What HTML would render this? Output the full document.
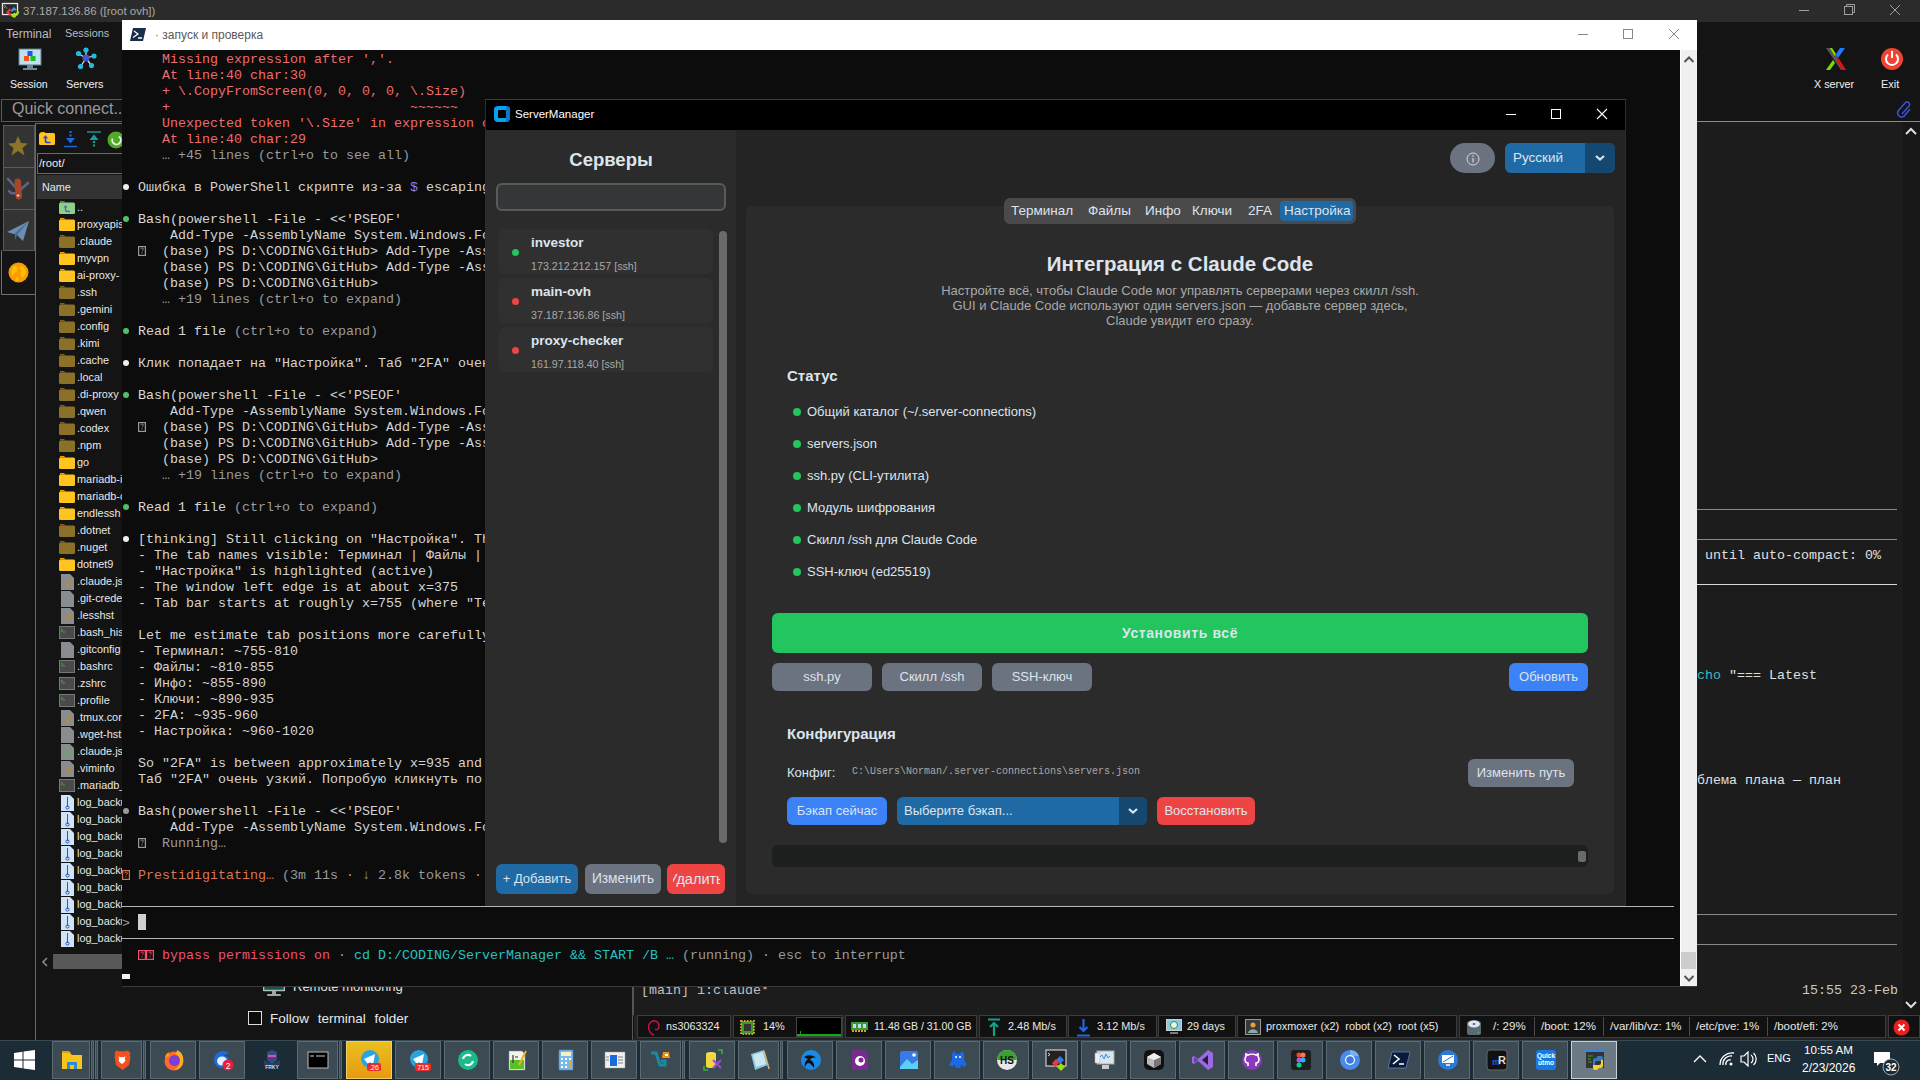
<!DOCTYPE html><html><head><meta charset="utf-8"><style>
*{margin:0;padding:0;box-sizing:border-box}
html,body{width:1920px;height:1080px;overflow:hidden;background:#141414;font-family:"Liberation Sans",sans-serif;font-size:12px;color:#ddd}
body{position:relative}
.a{position:absolute}
.nw{white-space:nowrap}
.mono{font-family:"Liberation Mono",monospace}
.tl{position:absolute;left:0;height:16px;line-height:16px;font-family:"Liberation Mono",monospace;font-size:13.333px;white-space:pre;color:#cccccc}
.rd{color:#ef6b6b}.gy{color:#9a9a9a}.wh{color:#d4d4d4}.bd{color:#d8d8d8}
.or{color:#d77757}.pk{color:#f0506e}.cy{color:#2bc0c0}
.dot{display:inline-block;width:6px;height:6px;border-radius:50%;vertical-align:1px;margin-left:1px;margin-right:1px}
.bx{display:inline-block;width:6px;height:9px;border:1px solid currentColor;vertical-align:-1px;margin-left:1px;margin-right:1px}
.fr{position:absolute;left:77px;height:17px;line-height:17px;font-size:10.9px;color:#e8e8e8;white-space:nowrap}
.fi{position:absolute;left:59px;width:16px;height:13px}
.btn{position:absolute;border-radius:6px;color:#dce4ee;font-size:13px;text-align:center;white-space:nowrap}
.tbi{position:absolute;top:1042px;width:46px;height:37px;background:#3b4a52;border:1px solid #56646b}
</style></head><body>
<div class="a" style="left:0;top:0;width:1920px;height:22px;background:#2b2b2b"></div>
<svg class="a" style="left:0px;top:0px" width="22" height="22" viewBox="0 0 22 22">
<rect x="2.5" y="3.5" width="15" height="11" fill="#2a2a2a" stroke="#e8e8e8" stroke-width="1.3"/>
<path d="M4.2 5.2l1.6 1.2-1.6 1.2M6 8h1.2" stroke="#ccc" fill="none" stroke-width=".7"/>
<path d="M10.5 10.5l3.5-3.5 2.5 2.5-1.5 1.5-1-1-2 2z" fill="#4d8ff0"/>
<path d="M6 12l3.5-3.5 1.5 1.5-2 2 2.5 2.5-1.5 1.5z" fill="#f03838"/>
<path d="M11 16l2.5-2.5 1-1 1 1 2.5-2.5 1.5 1.5-5 5.5z" fill="#99ee00"/>
</svg>
<div class="a nw" style="left:23px;top:5px;font-size:11.5px;color:#a9a9a9">37.187.136.86 ([root ovh])</div>
<svg class="a" style="left:1780px;top:0" width="140" height="22">
<path d="M19 10.5h10" stroke="#a0a0a0" stroke-width="1"/>
<rect x="64.5" y="6.5" width="8" height="8" fill="none" stroke="#a0a0a0"/><path d="M66.5 6.5v-2h8v8h-2" fill="none" stroke="#a0a0a0"/>
<path d="M110 5l10 10M120 5l-10 10" stroke="#a0a0a0" stroke-width="1"/>
</svg>
<div class="a" style="left:0;top:22px;width:1920px;height:100px;background:#141414"></div>
<div class="a nw" style="left:6px;top:27px;font-size:12px;color:#bdbdbd">Terminal</div>
<div class="a nw" style="left:65px;top:27px;font-size:10.9px;color:#bdbdbd">Sessions</div>
<svg class="a" style="left:18px;top:48px" width="24" height="22" viewBox="0 0 24 22">
<rect x="1" y="1" width="22" height="16" fill="#bfe0f0" stroke="#5a7a88" stroke-width="1"/>
<rect x="9" y="17" width="6" height="3" fill="#6a8a98"/><rect x="5" y="20" width="14" height="2" fill="#6a8a98"/>
<rect x="9.5" y="3" width="5" height="5" fill="#2255ee"/>
<rect x="6" y="8" width="5" height="5" fill="#ee5522"/>
<rect x="12.5" y="8" width="5" height="5" fill="#22bb22"/>
</svg>
<div class="a nw" style="left:10px;top:78px;font-size:10.6px;color:#f0f0f0">Session</div>
<svg class="a" style="left:74px;top:47px" width="24" height="24" viewBox="0 0 24 24">
<g stroke="#ddd" stroke-width="1.3"><path d="M12 11L5 7M12 11L12 3M12 11L19 9M12 11L7 19M12 11L17 18"/></g>
<circle cx="12" cy="11" r="3.5" fill="#4455cc"/>
<circle cx="4.5" cy="6.5" r="2.6" fill="#22bbdd"/><circle cx="12" cy="3" r="2.6" fill="#22bbdd"/>
<circle cx="20" cy="9" r="2.6" fill="#22bbdd"/><circle cx="6.5" cy="19.5" r="2.6" fill="#22bbdd"/><circle cx="17.5" cy="18.5" r="2.6" fill="#22bbdd"/>
</svg>
<div class="a nw" style="left:66px;top:78px;font-size:10.9px;color:#f0f0f0">Servers</div>
<svg class="a" style="left:1824px;top:47px" width="24" height="24" viewBox="0 0 24 24">
<path d="M2 1h5l15 22h-5z" fill="#555"/>
<path d="M6 1h2l4 6-1.5 2z" fill="#88dd00"/>
<path d="M16 1h5l-7 10-2.5-3z" fill="#2277ff"/>
<path d="M2 23h4l5-7-2-3z" fill="#77dd00"/>
<path d="M12 12l2.5-1 7.5 12h-4z" fill="#dd1111"/>
</svg>
<div class="a nw" style="left:1814px;top:78px;font-size:10.8px;color:#f0f0f0">X server</div>
<svg class="a" style="left:1880px;top:47px" width="24" height="24" viewBox="0 0 24 24">
<circle cx="12" cy="12" r="11" fill="#ee4433"/>
<path d="M8 7.5a6 6 0 1 0 8 0" fill="none" stroke="#fff" stroke-width="2"/><path d="M12 4v7" stroke="#fff" stroke-width="2"/>
</svg>
<div class="a nw" style="left:1881px;top:78px;font-size:11px;color:#f0f0f0">Exit</div>
<svg class="a" style="left:1896px;top:100px" width="18" height="18" viewBox="0 0 18 18">
<path d="M6 14l7-8a2.5 2.5 0 0 0-3.5-3.5l-7 8a4 4 0 0 0 5.6 5.6l6-7" fill="none" stroke="#3b4fd0" stroke-width="1.6"/>
</svg>
<div class="a" style="left:1px;top:99px;width:140px;height:23px;border:1px solid #5a5a5a;background:#141414"></div>
<div class="a nw" style="left:12px;top:100px;font-size:16px;color:#9a9a9a">Quick connect...</div>
<div class="a" style="left:0;top:122px;width:36px;height:918px;background:#141414"></div>
<div class="a" style="left:3px;top:125px;width:32px;height:43px;background:#333;border:1px solid #5a5a5a"></div>
<div class="a" style="left:3px;top:167px;width:32px;height:43px;background:#333;border:1px solid #5a5a5a"></div>
<div class="a" style="left:3px;top:209px;width:32px;height:42px;background:#333;border:1px solid #5a5a5a"></div>
<svg class="a" style="left:7px;top:135px" width="22" height="22" viewBox="0 0 22 22"><path d="M11 1l3 7 7 .5-5.5 4.5 2 7.5L11 16l-6.5 4.5 2-7.5L1 8.5 8 8z" fill="#8c7428"/></svg>
<svg class="a" style="left:6px;top:176px" width="24" height="26" viewBox="0 0 24 26"><path d="M2 3l9 10M22 7l-8 7M3 15c2 3 5 3 8 1" stroke="#5b6585" stroke-width="2.6" fill="none" stroke-linecap="round"/><rect x="9" y="2.5" width="6.5" height="21" rx="3.2" fill="#a84428" transform="rotate(-4 12 13)"/><path d="M12 18v3M10.5 19.5h3" stroke="#e8c8c0" stroke-width="1"/></svg>
<svg class="a" style="left:6px;top:219px" width="24" height="24" viewBox="0 0 24 24"><path d="M1 13L23 2 17 22 11 16z" fill="#6a8fb0"/><path d="M11 16l12-14-14 12v7z" fill="#4a6f90"/></svg>
<div class="a" style="left:1px;top:250px;width:35px;height:45px;border-left:1px solid #707070;border-bottom:1px solid #707070"></div>
<svg class="a" style="left:8px;top:262px" width="21" height="21" viewBox="0 0 21 21"><circle cx="10.5" cy="10.5" r="10" fill="#ff9a00"/><path d="M5 5c3-2 5 0 4 3s-3 2-4 5-2-4 0-8zM13 4c3 1 6 5 4 9s-3 3-4 0 2-3 0-5-2-3 0-4zM8 15c2-1 3 1 2 3s-3 1-2-3z" fill="#ffc400"/></svg>
<div class="a" style="left:35px;top:123px;width:598px;height:917px;background:#141414;border-left:1px solid #6a6a6a;border-top:1px solid #6a6a6a;border-right:1px solid #555"></div>
<svg class="a" style="left:39px;top:130px" width="90" height="20" viewBox="0 0 90 20">
<path d="M1.5 2h4l1.5 1.5H1.5z" fill="#f0a800"/><rect x="0" y="3" width="16" height="12" rx="1.5" fill="#ffc420"/>
<path d="M6.5 7v3.5a2 2 0 0 0 2 2h3" stroke="#3348c8" stroke-width="1.7" fill="none"/><path d="M3.8 8.2l2.7-3 2.7 3z" fill="#3348c8"/>
<path d="M31.5 1v2M31.5 4.5v2" stroke="#1f6ad8" stroke-width="2.2"/><path d="M27 8h9l-4.5 5.5z" fill="#1f6ad8"/><path d="M25 16.5h13" stroke="#1f6ad8" stroke-width="1.4"/>
<path d="M48 2h14" stroke="#12a0a0" stroke-width="1.4"/><path d="M50.5 10h9l-4.5-5.5z" fill="#12a0a0"/><path d="M55 11v2M55 14.5v2" stroke="#12a0a0" stroke-width="2.2"/>
<circle cx="77" cy="10" r="8.5" fill="#52a828"/><path d="M73.5 8.5a4.3 4.3 0 1 0 6.3-2" stroke="#e8f8e0" stroke-width="1.8" fill="none"/>
</svg>
<div class="a" style="left:37px;top:153px;width:596px;height:21px;border:1px solid #6a6a6a;background:#141414"></div>
<div class="a nw" style="left:39px;top:157px;font-size:11.2px;color:#f0f0f0">/root/</div>
<div class="a" style="left:37px;top:175px;width:596px;height:24px;background:#333"></div>
<div class="a nw" style="left:42px;top:181px;font-size:10.8px;color:#e8e8e8">Name</div>
<svg class="fi" style="top:201px" viewBox="0 0 16 13"><path d="M1 0h4l1.5 1.5H1z" fill="#22aa22"/><rect x="0" y="1.5" width="16" height="11.5" rx="1.5" fill="#8ecf8e"/><path d="M6.5 5.5v3a2 2 0 0 0 2 2h2.5" stroke="#5560b0" stroke-width="1.3" fill="none"/><path d="M4.5 6.5l2-2.2 2 2.2z" fill="#5560b0"/></svg>
<div class="fr" style="top:199px">..</div>
<svg class="fi" style="top:218px" viewBox="0 0 16 13"><path d="M1 0h4l1.5 1.5H1z" fill="#f0a000"/><rect x="0" y="1.5" width="16" height="11.5" rx="1.5" fill="#ffc420"/></svg>
<div class="fr" style="top:216px">proxyapis</div>
<svg class="fi" style="top:235px" viewBox="0 0 16 13"><path d="M1 0h4l1.5 1.5H1z" fill="#7a6020"/><rect x="0" y="1.5" width="16" height="11.5" rx="1.5" fill="#8b7128"/></svg>
<div class="fr" style="top:233px">.claude</div>
<svg class="fi" style="top:252px" viewBox="0 0 16 13"><path d="M1 0h4l1.5 1.5H1z" fill="#f0a000"/><rect x="0" y="1.5" width="16" height="11.5" rx="1.5" fill="#ffc420"/></svg>
<div class="fr" style="top:250px">myvpn</div>
<svg class="fi" style="top:269px" viewBox="0 0 16 13"><path d="M1 0h4l1.5 1.5H1z" fill="#f0a000"/><rect x="0" y="1.5" width="16" height="11.5" rx="1.5" fill="#ffc420"/></svg>
<div class="fr" style="top:267px">ai-proxy-</div>
<svg class="fi" style="top:286px" viewBox="0 0 16 13"><path d="M1 0h4l1.5 1.5H1z" fill="#7a6020"/><rect x="0" y="1.5" width="16" height="11.5" rx="1.5" fill="#8b7128"/></svg>
<div class="fr" style="top:284px">.ssh</div>
<svg class="fi" style="top:303px" viewBox="0 0 16 13"><path d="M1 0h4l1.5 1.5H1z" fill="#7a6020"/><rect x="0" y="1.5" width="16" height="11.5" rx="1.5" fill="#8b7128"/></svg>
<div class="fr" style="top:301px">.gemini</div>
<svg class="fi" style="top:320px" viewBox="0 0 16 13"><path d="M1 0h4l1.5 1.5H1z" fill="#7a6020"/><rect x="0" y="1.5" width="16" height="11.5" rx="1.5" fill="#8b7128"/></svg>
<div class="fr" style="top:318px">.config</div>
<svg class="fi" style="top:337px" viewBox="0 0 16 13"><path d="M1 0h4l1.5 1.5H1z" fill="#7a6020"/><rect x="0" y="1.5" width="16" height="11.5" rx="1.5" fill="#8b7128"/></svg>
<div class="fr" style="top:335px">.kimi</div>
<svg class="fi" style="top:354px" viewBox="0 0 16 13"><path d="M1 0h4l1.5 1.5H1z" fill="#7a6020"/><rect x="0" y="1.5" width="16" height="11.5" rx="1.5" fill="#8b7128"/></svg>
<div class="fr" style="top:352px">.cache</div>
<svg class="fi" style="top:371px" viewBox="0 0 16 13"><path d="M1 0h4l1.5 1.5H1z" fill="#7a6020"/><rect x="0" y="1.5" width="16" height="11.5" rx="1.5" fill="#8b7128"/></svg>
<div class="fr" style="top:369px">.local</div>
<svg class="fi" style="top:388px" viewBox="0 0 16 13"><path d="M1 0h4l1.5 1.5H1z" fill="#7a6020"/><rect x="0" y="1.5" width="16" height="11.5" rx="1.5" fill="#8b7128"/></svg>
<div class="fr" style="top:386px">.di-proxy</div>
<svg class="fi" style="top:405px" viewBox="0 0 16 13"><path d="M1 0h4l1.5 1.5H1z" fill="#7a6020"/><rect x="0" y="1.5" width="16" height="11.5" rx="1.5" fill="#8b7128"/></svg>
<div class="fr" style="top:403px">.qwen</div>
<svg class="fi" style="top:422px" viewBox="0 0 16 13"><path d="M1 0h4l1.5 1.5H1z" fill="#7a6020"/><rect x="0" y="1.5" width="16" height="11.5" rx="1.5" fill="#8b7128"/></svg>
<div class="fr" style="top:420px">.codex</div>
<svg class="fi" style="top:439px" viewBox="0 0 16 13"><path d="M1 0h4l1.5 1.5H1z" fill="#7a6020"/><rect x="0" y="1.5" width="16" height="11.5" rx="1.5" fill="#8b7128"/></svg>
<div class="fr" style="top:437px">.npm</div>
<svg class="fi" style="top:456px" viewBox="0 0 16 13"><path d="M1 0h4l1.5 1.5H1z" fill="#f0a000"/><rect x="0" y="1.5" width="16" height="11.5" rx="1.5" fill="#ffc420"/></svg>
<div class="fr" style="top:454px">go</div>
<svg class="fi" style="top:473px" viewBox="0 0 16 13"><path d="M1 0h4l1.5 1.5H1z" fill="#f0a000"/><rect x="0" y="1.5" width="16" height="11.5" rx="1.5" fill="#ffc420"/></svg>
<div class="fr" style="top:471px">mariadb-i</div>
<svg class="fi" style="top:490px" viewBox="0 0 16 13"><path d="M1 0h4l1.5 1.5H1z" fill="#f0a000"/><rect x="0" y="1.5" width="16" height="11.5" rx="1.5" fill="#ffc420"/></svg>
<div class="fr" style="top:488px">mariadb-c</div>
<svg class="fi" style="top:507px" viewBox="0 0 16 13"><path d="M1 0h4l1.5 1.5H1z" fill="#f0a000"/><rect x="0" y="1.5" width="16" height="11.5" rx="1.5" fill="#ffc420"/></svg>
<div class="fr" style="top:505px">endlessh</div>
<svg class="fi" style="top:524px" viewBox="0 0 16 13"><path d="M1 0h4l1.5 1.5H1z" fill="#7a6020"/><rect x="0" y="1.5" width="16" height="11.5" rx="1.5" fill="#8b7128"/></svg>
<div class="fr" style="top:522px">.dotnet</div>
<svg class="fi" style="top:541px" viewBox="0 0 16 13"><path d="M1 0h4l1.5 1.5H1z" fill="#7a6020"/><rect x="0" y="1.5" width="16" height="11.5" rx="1.5" fill="#8b7128"/></svg>
<div class="fr" style="top:539px">.nuget</div>
<svg class="fi" style="top:558px" viewBox="0 0 16 13"><path d="M1 0h4l1.5 1.5H1z" fill="#f0a000"/><rect x="0" y="1.5" width="16" height="11.5" rx="1.5" fill="#ffc420"/></svg>
<div class="fr" style="top:556px">dotnet9</div>
<svg class="fi" style="top:574px;left:61px;width:13px;height:16px" viewBox="0 0 13 16"><path d="M0 0h9l4 4v12H0z" fill="#8a8d90"/><path d="M5 12l5-6" stroke="#c08830" stroke-width="2"/></svg>
<div class="fr" style="top:573px">.claude.js</div>
<svg class="fi" style="top:591px;left:61px;width:13px;height:16px" viewBox="0 0 13 16"><path d="M0 0h9l4 4v12H0z" fill="#8a8d90"/></svg>
<div class="fr" style="top:590px">.git-crede</div>
<svg class="fi" style="top:608px;left:61px;width:13px;height:16px" viewBox="0 0 13 16"><path d="M0 0h9l4 4v12H0z" fill="#8a8d90"/><path d="M5 12l5-6" stroke="#c08830" stroke-width="2"/></svg>
<div class="fr" style="top:607px">.lesshst</div>
<svg class="fi" style="top:626px" viewBox="0 0 16 13"><rect x=".5" y=".5" width="15" height="12" fill="#4a4a4a" stroke="#777"/><path d="M2 3l2 1.5-2 1.5M4 6h2" stroke="#3c3" stroke-width=".8" fill="none"/></svg>
<div class="fr" style="top:624px">.bash_his</div>
<svg class="fi" style="top:642px;left:61px;width:13px;height:16px" viewBox="0 0 13 16"><path d="M0 0h9l4 4v12H0z" fill="#8a8d90"/></svg>
<div class="fr" style="top:641px">.gitconfig</div>
<svg class="fi" style="top:660px" viewBox="0 0 16 13"><rect x=".5" y=".5" width="15" height="12" fill="#4a4a4a" stroke="#777"/><path d="M2 3l2 1.5-2 1.5M4 6h2" stroke="#3c3" stroke-width=".8" fill="none"/></svg>
<div class="fr" style="top:658px">.bashrc</div>
<svg class="fi" style="top:677px" viewBox="0 0 16 13"><rect x=".5" y=".5" width="15" height="12" fill="#4a4a4a" stroke="#777"/><path d="M2 3l2 1.5-2 1.5M4 6h2" stroke="#3c3" stroke-width=".8" fill="none"/></svg>
<div class="fr" style="top:675px">.zshrc</div>
<svg class="fi" style="top:694px" viewBox="0 0 16 13"><rect x=".5" y=".5" width="15" height="12" fill="#4a4a4a" stroke="#777"/><path d="M2 3l2 1.5-2 1.5M4 6h2" stroke="#3c3" stroke-width=".8" fill="none"/></svg>
<div class="fr" style="top:692px">.profile</div>
<svg class="fi" style="top:710px;left:61px;width:13px;height:16px" viewBox="0 0 13 16"><path d="M0 0h9l4 4v12H0z" fill="#8a8d90"/><path d="M5 12l5-6" stroke="#c08830" stroke-width="2"/></svg>
<div class="fr" style="top:709px">.tmux.con</div>
<svg class="fi" style="top:727px;left:61px;width:13px;height:16px" viewBox="0 0 13 16"><path d="M0 0h9l4 4v12H0z" fill="#8a8d90"/></svg>
<div class="fr" style="top:726px">.wget-hst</div>
<svg class="fi" style="top:744px;left:61px;width:13px;height:16px" viewBox="0 0 13 16"><path d="M0 0h9l4 4v12H0z" fill="#8a8d90"/><circle cx="7" cy="8" r="3" fill="none" stroke="#6a6" stroke-width="1.2"/></svg>
<div class="fr" style="top:743px">.claude.js</div>
<svg class="fi" style="top:761px;left:61px;width:13px;height:16px" viewBox="0 0 13 16"><path d="M0 0h9l4 4v12H0z" fill="#8a8d90"/><path d="M5 12l5-6" stroke="#c08830" stroke-width="2"/></svg>
<div class="fr" style="top:760px">.viminfo</div>
<svg class="fi" style="top:779px" viewBox="0 0 16 13"><rect x=".5" y=".5" width="15" height="12" fill="#4a4a4a" stroke="#777"/><path d="M2 3l2 1.5-2 1.5M4 6h2" stroke="#3c3" stroke-width=".8" fill="none"/></svg>
<div class="fr" style="top:777px">.mariadb_</div>
<svg class="fi" style="top:795px;left:61px;width:13px;height:16px" viewBox="0 0 13 16"><path d="M0 0h9l4 4v12H0z" fill="#cfe4f8"/><path d="M6.5 2v10" stroke="#3355bb" stroke-width="1"/><circle cx="6.5" cy="12.5" r="1.6" fill="none" stroke="#3355bb"/></svg>
<div class="fr" style="top:794px">log_backu</div>
<svg class="fi" style="top:812px;left:61px;width:13px;height:16px" viewBox="0 0 13 16"><path d="M0 0h9l4 4v12H0z" fill="#cfe4f8"/><path d="M6.5 2v10" stroke="#3355bb" stroke-width="1"/><circle cx="6.5" cy="12.5" r="1.6" fill="none" stroke="#3355bb"/></svg>
<div class="fr" style="top:811px">log_backu</div>
<svg class="fi" style="top:829px;left:61px;width:13px;height:16px" viewBox="0 0 13 16"><path d="M0 0h9l4 4v12H0z" fill="#cfe4f8"/><path d="M6.5 2v10" stroke="#3355bb" stroke-width="1"/><circle cx="6.5" cy="12.5" r="1.6" fill="none" stroke="#3355bb"/></svg>
<div class="fr" style="top:828px">log_backu</div>
<svg class="fi" style="top:846px;left:61px;width:13px;height:16px" viewBox="0 0 13 16"><path d="M0 0h9l4 4v12H0z" fill="#cfe4f8"/><path d="M6.5 2v10" stroke="#3355bb" stroke-width="1"/><circle cx="6.5" cy="12.5" r="1.6" fill="none" stroke="#3355bb"/></svg>
<div class="fr" style="top:845px">log_backu</div>
<svg class="fi" style="top:863px;left:61px;width:13px;height:16px" viewBox="0 0 13 16"><path d="M0 0h9l4 4v12H0z" fill="#cfe4f8"/><path d="M6.5 2v10" stroke="#3355bb" stroke-width="1"/><circle cx="6.5" cy="12.5" r="1.6" fill="none" stroke="#3355bb"/></svg>
<div class="fr" style="top:862px">log_backu</div>
<svg class="fi" style="top:880px;left:61px;width:13px;height:16px" viewBox="0 0 13 16"><path d="M0 0h9l4 4v12H0z" fill="#cfe4f8"/><path d="M6.5 2v10" stroke="#3355bb" stroke-width="1"/><circle cx="6.5" cy="12.5" r="1.6" fill="none" stroke="#3355bb"/></svg>
<div class="fr" style="top:879px">log_backu</div>
<svg class="fi" style="top:897px;left:61px;width:13px;height:16px" viewBox="0 0 13 16"><path d="M0 0h9l4 4v12H0z" fill="#cfe4f8"/><path d="M6.5 2v10" stroke="#3355bb" stroke-width="1"/><circle cx="6.5" cy="12.5" r="1.6" fill="none" stroke="#3355bb"/></svg>
<div class="fr" style="top:896px">log_backu</div>
<svg class="fi" style="top:914px;left:61px;width:13px;height:16px" viewBox="0 0 13 16"><path d="M0 0h9l4 4v12H0z" fill="#cfe4f8"/><path d="M6.5 2v10" stroke="#3355bb" stroke-width="1"/><circle cx="6.5" cy="12.5" r="1.6" fill="none" stroke="#3355bb"/></svg>
<div class="fr" style="top:913px">log_backu</div>
<svg class="fi" style="top:931px;left:61px;width:13px;height:16px" viewBox="0 0 13 16"><path d="M0 0h9l4 4v12H0z" fill="#cfe4f8"/><path d="M6.5 2v10" stroke="#3355bb" stroke-width="1"/><circle cx="6.5" cy="12.5" r="1.6" fill="none" stroke="#3355bb"/></svg>
<div class="fr" style="top:930px">log_backu</div>
<div class="a" style="left:37px;top:953px;width:595px;height:87px;background:#141414"></div>
<svg class="a" style="left:41px;top:957px" width="8" height="10"><path d="M6 1L2 5l4 4" stroke="#8a8a8a" stroke-width="1.6" fill="none"/></svg>
<div class="a" style="left:53px;top:954px;width:580px;height:15px;background:#585858"></div>
<svg class="a" style="left:263px;top:976px" width="22" height="22" viewBox="0 0 22 22"><rect x=".5" y=".5" width="21" height="14" rx="1" fill="#0f5a48" stroke="#b0bcc0" stroke-width="1.6"/><path d="M10 3.5l1 1.5 1-1.5z" fill="#3fd8b0"/><rect x="9" y="15" width="4" height="3" fill="#9aa8ac"/><rect x="4" y="18" width="14" height="2" rx="1" fill="#9aa8ac"/></svg>
<div class="a nw" style="left:293px;top:979px;font-size:13px;color:#e0e0e0">Remote monitoring</div>
<div class="a" style="left:248px;top:1011px;width:14px;height:14px;border:1px solid #ddd;background:#0c0c0c"></div>
<div class="a nw" style="left:270px;top:1011px;font-size:13.5px;color:#e8e8e8;word-spacing:5px">Follow terminal folder</div>
<div class="a" style="left:1697px;top:121px;width:223px;height:1px;background:#8a8a8a"></div>
<div class="a" style="left:1697px;top:122px;width:223px;height:893px;background:#1c1c1c"></div>
<div class="a" style="left:1903px;top:122px;width:17px;height:893px;background:#171717"></div>
<svg class="a" style="left:1904px;top:126px" width="14" height="10"><path d="M2 8l5-5 5 5" stroke="#ddd" stroke-width="2" fill="none"/></svg>
<svg class="a" style="left:1904px;top:1000px" width="14" height="10"><path d="M2 2l5 5 5-5" stroke="#ddd" stroke-width="2" fill="none"/></svg>
<div class="a" style="left:1697px;top:509px;width:200px;height:1px;background:#8a8a8a"></div>
<div class="a" style="left:1697px;top:539px;width:200px;height:1px;background:#8a8a8a"></div>
<div class="a" style="left:1697px;top:584px;width:200px;height:1px;background:#d8d8d8"></div>
<div class="a" style="left:1697px;top:914px;width:200px;height:1px;background:#8a8a8a"></div>
<div class="a" style="left:1697px;top:944px;width:200px;height:1px;background:#8a8a8a"></div>
<div class="a nw mono" style="left:1705px;top:548px;height:15px;line-height:15px;font-size:13.333px;color:#e0e0e0">until auto-compact: 0%</div>
<div class="a nw mono" style="left:1697px;top:668px;height:15px;line-height:15px;font-size:13.333px;color:#e0e0e0"><span style="color:#3cb8c8">cho</span> "=== Latest</div>
<div class="a nw mono" style="left:1697px;top:773px;height:15px;line-height:15px;font-size:13.333px;color:#e0e0e0">блема плана — план</div>
<div class="a nw mono" style="left:1802px;top:983px;height:15px;line-height:15px;font-size:13.333px;color:#c8c8c8">15:55 23-Feb</div>
<div class="a" style="left:634px;top:986px;width:1063px;height:29px;background:#1c1c1c"></div>
<div class="a" style="left:633px;top:986px;width:1px;height:29px;background:#555"></div>
<div class="a nw mono" style="left:641px;top:983px;height:15px;line-height:15px;font-size:13.333px;color:#c0c0c0">[main] 1:claude*</div>
<div class="a" style="left:634px;top:1015px;width:1286px;height:25px;background:#232323"></div>
<div class="a" style="left:637px;top:1015px;width:94px;height:23px;background:#111111;border:1px solid #3c3c3c"></div>
<div class="a" style="left:733px;top:1015px;width:110px;height:23px;background:#111111;border:1px solid #3c3c3c"></div>
<div class="a" style="left:845px;top:1015px;width:132px;height:23px;background:#111111;border:1px solid #3c3c3c"></div>
<div class="a" style="left:979px;top:1015px;width:88px;height:23px;background:#111111;border:1px solid #3c3c3c"></div>
<div class="a" style="left:1068px;top:1015px;width:89px;height:23px;background:#111111;border:1px solid #3c3c3c"></div>
<div class="a" style="left:1158px;top:1015px;width:78px;height:23px;background:#111111;border:1px solid #3c3c3c"></div>
<div class="a" style="left:1237px;top:1015px;width:220px;height:23px;background:#111111;border:1px solid #3c3c3c"></div>
<div class="a" style="left:1459px;top:1015px;width:427px;height:23px;background:#111111;border:1px solid #3c3c3c"></div>
<div class="a" style="left:1888px;top:1015px;width:32px;height:23px;background:#111111;border:1px solid #3c3c3c"></div>
<div class="a" style="left:1534px;top:1017px;width:1px;height:19px;background:#4a4a4a"></div>
<div class="a" style="left:1603px;top:1017px;width:1px;height:19px;background:#4a4a4a"></div>
<div class="a" style="left:1689px;top:1017px;width:1px;height:19px;background:#4a4a4a"></div>
<div class="a" style="left:1767px;top:1017px;width:1px;height:19px;background:#4a4a4a"></div>
<svg class="a" style="left:646px;top:1018px" width="14" height="19" viewBox="0 0 14 19"><path d="M8 17C2 15 1 7 5 4s8 0 8 4-3 4-4 3" fill="none" stroke="#d0104a" stroke-width="1.4"/></svg>
<div class="a" style="white-space:pre;left:666px;top:1020px;font-size:10.8px;color:#e8e8e8">ns3063324</div>
<svg class="a" style="left:739px;top:1019px" width="17" height="17" viewBox="0 0 17 17"><rect x="2" y="2" width="13" height="13" fill="#3a9a2a" stroke="#d8a020" stroke-dasharray="1.5 1.5" stroke-width="2"/><rect x="5" y="5" width="7" height="7" fill="#333"/></svg>
<div class="a" style="white-space:pre;left:763px;top:1020px;font-size:10.9px;color:#e8e8e8">14%</div>
<div class="a" style="left:796px;top:1017px;width:46px;height:20px;background:#000;border:1px solid #444"></div>
<div class="a" style="left:797px;top:1034px;width:44px;height:2px;background:#11aa11"></div>
<div class="a" style="left:800px;top:1031px;width:1px;height:3px;background:#11aa11"></div>
<svg class="a" style="left:851px;top:1021px" width="17" height="12" viewBox="0 0 17 12"><rect x="0" y="1" width="17" height="8" fill="#3a9a3a"/><rect x="2" y="3" width="3" height="4" fill="#bde"/><rect x="7" y="3" width="3" height="4" fill="#bde"/><rect x="12" y="3" width="3" height="4" fill="#bde"/><path d="M1 10h15" stroke="#d8a020" stroke-width="2" stroke-dasharray="2 1"/></svg>
<div class="a" style="white-space:pre;left:874px;top:1020px;font-size:10.6px;color:#e8e8e8">11.48 GB / 31.00 GB</div>
<svg class="a" style="left:987px;top:1018px" width="14" height="19" viewBox="0 0 14 19"><path d="M1 1.5h12M7 18V6M3 9l4-4 4 4" stroke="#13a08a" stroke-width="2.2" fill="none"/></svg>
<div class="a" style="white-space:pre;left:1008px;top:1020px;font-size:10.9px;color:#e8e8e8">2.48 Mb/s</div>
<svg class="a" style="left:1076px;top:1018px" width="15" height="19" viewBox="0 0 15 19"><path d="M1 17.5h13M7.5 1v12M3.5 9l4 4 4-4" stroke="#2266dd" stroke-width="2.2" fill="none"/></svg>
<div class="a" style="white-space:pre;left:1097px;top:1020px;font-size:10.9px;color:#e8e8e8">3.12 Mb/s</div>
<svg class="a" style="left:1166px;top:1019px" width="16" height="16" viewBox="0 0 16 16"><rect x=".5" y=".5" width="15" height="11" fill="#8ac8e8" stroke="#ccc"/><circle cx="8" cy="6" r="3.5" fill="#e8f8e0" stroke="#3a8a3a"/><path d="M4 14h8" stroke="#aaa" stroke-width="1.4"/></svg>
<div class="a" style="white-space:pre;left:1187px;top:1020px;font-size:10.85px;color:#e8e8e8">29 days</div>
<svg class="a" style="left:1245px;top:1019px" width="16" height="16" viewBox="0 0 16 16"><rect x=".5" y=".5" width="15" height="15" fill="#3a3a3a" stroke="#999"/><circle cx="8" cy="6" r="2.5" fill="#e8a040"/><path d="M3 14c1-5 9-5 10 0z" fill="#8aa"/></svg>
<div class="a" style="white-space:pre;left:1266px;top:1020px;font-size:10.9px;color:#e8e8e8">proxmoxer (x2)  robot (x2)  root (x5)</div>
<svg class="a" style="left:1466px;top:1018px" width="16" height="18" viewBox="0 0 16 18"><path d="M1 5a7 3 0 0 1 14 0v10a2 2 0 0 1-2 2H3a2 2 0 0 1-2-2z" fill="#5a6a78"/><ellipse cx="8" cy="6" rx="6" ry="3.5" fill="#dfe8f0"/><ellipse cx="8" cy="6" rx="1.5" ry="1" fill="#5a6a78"/><circle cx="12.5" cy="14.5" r=".9" fill="#3c3"/></svg>
<div class="a" style="white-space:pre;left:1493px;top:1020px;font-size:11.5px;color:#e8e8e8">/: 29%</div>
<div class="a" style="white-space:pre;left:1541px;top:1020px;font-size:11.5px;color:#e8e8e8">/boot: 12%</div>
<div class="a" style="white-space:pre;left:1610px;top:1020px;font-size:11.5px;color:#e8e8e8">/var/lib/vz: 1%</div>
<div class="a" style="white-space:pre;left:1696px;top:1020px;font-size:11.5px;color:#e8e8e8">/etc/pve: 1%</div>
<div class="a" style="white-space:pre;left:1774px;top:1020px;font-size:11.5px;color:#e8e8e8">/boot/efi: 2%</div>
<svg class="a" style="left:1893px;top:1019px" width="17" height="17" viewBox="0 0 17 17"><circle cx="8.5" cy="8.5" r="8" fill="#e82020"/><path d="M5.5 5.5l6 6M11.5 5.5l-6 6" stroke="#fff" stroke-width="2"/></svg>
<div class="a" style="left:0;top:1040px;width:1920px;height:40px;background:#1c2c36"></div>
<div class="a" style="left:0;top:1040px;width:1920px;height:1px;background:#3a4a52"></div>
<svg class="a" style="left:14px;top:1050px" width="21" height="20" viewBox="0 0 21 20"><path d="M0 3l8.5-1.2V9.5H0zM9.5 1.6L21 0v9.5H9.5zM0 10.5h8.5v7.7L0 17zM9.5 10.5H21V20L9.5 18.4z" fill="#fff"/></svg>
<div class="a" style="left:52px;top:1041px;width:38px;height:38px;background:#3c4b53;border:1px solid #5c6a71"></div>
<div class="a" style="left:91px;top:1041px;width:3px;height:38px;background:#3c4b53;border:1px solid #5c6a71"></div>
<div class="a" style="left:95px;top:1041px;width:3px;height:38px;background:#3c4b53;border:1px solid #5c6a71"></div>
<div class="a" style="left:101px;top:1041px;width:41px;height:38px;background:#3c4b53;border:1px solid #5c6a71"></div>
<div class="a" style="left:143px;top:1041px;width:3px;height:38px;background:#3c4b53;border:1px solid #5c6a71"></div>
<div class="a" style="left:150px;top:1041px;width:46px;height:38px;background:#3c4b53;border:1px solid #5c6a71"></div>
<div class="a" style="left:199px;top:1041px;width:46px;height:38px;background:#3c4b53;border:1px solid #5c6a71"></div>
<div class="a" style="left:297px;top:1041px;width:41px;height:38px;background:#3c4b53;border:1px solid #5c6a71"></div>
<div class="a" style="left:339px;top:1041px;width:3px;height:38px;background:#3c4b53;border:1px solid #5c6a71"></div>
<div class="a" style="left:346px;top:1041px;width:46px;height:38px;background:linear-gradient(#e8c020,#e89a10);border:1px solid #f0d060"></div>
<div class="a" style="left:395px;top:1041px;width:46px;height:38px;background:#3c4b53;border:1px solid #5c6a71"></div>
<div class="a" style="left:444px;top:1041px;width:46px;height:38px;background:#3c4b53;border:1px solid #5c6a71"></div>
<div class="a" style="left:493px;top:1041px;width:46px;height:38px;background:#3c4b53;border:1px solid #5c6a71"></div>
<div class="a" style="left:542px;top:1041px;width:46px;height:38px;background:#3c4b53;border:1px solid #5c6a71"></div>
<div class="a" style="left:591px;top:1041px;width:46px;height:38px;background:#3c4b53;border:1px solid #5c6a71"></div>
<div class="a" style="left:640px;top:1041px;width:41px;height:38px;background:#3c4b53;border:1px solid #5c6a71"></div>
<div class="a" style="left:682px;top:1041px;width:3px;height:38px;background:#3c4b53;border:1px solid #5c6a71"></div>
<div class="a" style="left:689px;top:1041px;width:46px;height:38px;background:#3c4b53;border:1px solid #5c6a71"></div>
<div class="a" style="left:738px;top:1041px;width:41px;height:38px;background:#3c4b53;border:1px solid #5c6a71"></div>
<div class="a" style="left:780px;top:1041px;width:3px;height:38px;background:#3c4b53;border:1px solid #5c6a71"></div>
<div class="a" style="left:787px;top:1041px;width:46px;height:38px;background:#3c4b53;border:1px solid #5c6a71"></div>
<div class="a" style="left:836px;top:1041px;width:46px;height:38px;background:#3c4b53;border:1px solid #5c6a71"></div>
<div class="a" style="left:885px;top:1041px;width:46px;height:38px;background:#3c4b53;border:1px solid #5c6a71"></div>
<div class="a" style="left:934px;top:1041px;width:46px;height:38px;background:#3c4b53;border:1px solid #5c6a71"></div>
<div class="a" style="left:983px;top:1041px;width:46px;height:38px;background:#3c4b53;border:1px solid #5c6a71"></div>
<div class="a" style="left:1032px;top:1041px;width:46px;height:38px;background:#3c4b53;border:1px solid #5c6a71"></div>
<div class="a" style="left:1081px;top:1041px;width:46px;height:38px;background:#3c4b53;border:1px solid #5c6a71"></div>
<div class="a" style="left:1130px;top:1041px;width:46px;height:38px;background:#3c4b53;border:1px solid #5c6a71"></div>
<div class="a" style="left:1179px;top:1041px;width:46px;height:38px;background:#3c4b53;border:1px solid #5c6a71"></div>
<div class="a" style="left:1228px;top:1041px;width:46px;height:38px;background:#3c4b53;border:1px solid #5c6a71"></div>
<div class="a" style="left:1277px;top:1041px;width:46px;height:38px;background:#3c4b53;border:1px solid #5c6a71"></div>
<div class="a" style="left:1326px;top:1041px;width:46px;height:38px;background:#3c4b53;border:1px solid #5c6a71"></div>
<div class="a" style="left:1375px;top:1041px;width:46px;height:38px;background:#3c4b53;border:1px solid #5c6a71"></div>
<div class="a" style="left:1424px;top:1041px;width:46px;height:38px;background:#3c4b53;border:1px solid #5c6a71"></div>
<div class="a" style="left:1473px;top:1041px;width:46px;height:38px;background:#3c4b53;border:1px solid #5c6a71"></div>
<div class="a" style="left:1522px;top:1041px;width:46px;height:38px;background:#3c4b53;border:1px solid #5c6a71"></div>
<div class="a" style="left:1571px;top:1041px;width:46px;height:38px;background:#6b7a84;border:1px solid #c8d0d4"></div>
<svg class="a" style="left:60px;top:1048px" width="24" height="24" viewBox="0 0 24 24"><path d="M2 5h8l2 2h10v14H2z" fill="#f5c518"/><path d="M2 3h7l2 2H2z" fill="#e0a000"/><path d="M7 14h10v7h-3v-4h-4v4H7z" fill="#2a8ae0"/></svg>
<svg class="a" style="left:110px;top:1048px" width="24" height="24" viewBox="0 0 24 24"><path d="M6 2.5l3 .8h6l3-.8 2.5 3-.8 2 .8 1.5-1.5 8-6.5 5-6.5-5-1.5-8 .8-1.5-.8-2z" fill="#f4511e"/><path d="M8.5 8.5l2.5.7 1-.5 1 .5 2.5-.7-.8 2.5.8 1.5-1.5 2-2 1.5-2-1.5-1.5-2 .8-1.5z" fill="#fff"/><path d="M11 16.5h2l-1 1.2z" fill="#f4511e"/></svg>
<svg class="a" style="left:162px;top:1048px" width="24" height="24" viewBox="0 0 24 24"><circle cx="12" cy="13" r="9.5" fill="#ff6a2a"/><circle cx="12.5" cy="12.5" r="5.5" fill="#7b3fd8"/><path d="M15 2c5 2 7 7 6 12-1 5-5 8-9 8 4-2 6-5 6-9 0-4-2-6-5-7 1-1 2-2 2-4z" fill="#ffb020"/><path d="M3 10c0-3 2-5 4-6-1 2 0 3 1 4-2 0-4 1-5 2z" fill="#ff9a18"/></svg>
<svg class="a" style="left:211px;top:1048px" width="24" height="24" viewBox="0 0 24 24"><path d="M3 12c0-5 4-9 9-9 3 0 5 1 7 3-2-1-5 0-6 2 3 0 5 2 5 5 0 4-3 7-7 7s-8-3-8-8z" fill="#1e6ad8"/><ellipse cx="11" cy="13" rx="5" ry="4.5" fill="#dfefff"/><circle cx="17" cy="17" r="5.5" fill="#e81c3c"/><text x="17" y="20.5" font-size="8.5" fill="#fff" text-anchor="middle" font-family="Liberation Sans">2</text></svg>
<svg class="a" style="left:260px;top:1048px" width="24" height="24" viewBox="0 0 24 24"><path d="M7 4l5-2 5 2v8l-5 4-5-4z" fill="#3a4a7a"/><rect x="8" y="7" width="8" height="2" fill="#d050d0"/><path d="M4 12l8 4 8-4v6H4z" fill="#2a3a6a"/><text x="12" y="21" font-size="5" fill="#ddd" text-anchor="middle" font-family="Liberation Sans" font-weight="bold">FRKY</text></svg>
<svg class="a" style="left:306px;top:1048px" width="24" height="24" viewBox="0 0 24 24"><rect x="2" y="4" width="20" height="16" fill="#000" stroke="#bbb"/><path d="M4 8h4M10 8h9" stroke="#ccc" stroke-width="1"/></svg>
<svg class="a" style="left:358px;top:1048px" width="24" height="24" viewBox="0 0 24 24"><circle cx="12" cy="11" r="9" fill="#2aa3e0"/><path d="M6 11l11-5-2 11-3-3-2 2z" fill="#fff"/><rect x="9" y="15" width="14" height="8" rx="2" fill="#e82c2c"/><text x="16" y="21.5" font-size="7" fill="#fff" text-anchor="middle" font-family="Liberation Sans">.26</text></svg>
<svg class="a" style="left:407px;top:1048px" width="24" height="24" viewBox="0 0 24 24"><circle cx="12" cy="11" r="9" fill="#2aa3e0"/><path d="M6 11l11-5-2 11-3-3-2 2z" fill="#fff"/><rect x="8" y="15" width="16" height="8" rx="2" fill="#e82c2c"/><text x="16" y="21.5" font-size="7" fill="#fff" text-anchor="middle" font-family="Liberation Sans">715</text></svg>
<svg class="a" style="left:456px;top:1048px" width="24" height="24" viewBox="0 0 24 24"><circle cx="12" cy="12" r="10" fill="#1aba8a"/><path d="M7 11a5 5 0 0 1 8-3M17 13a5 5 0 0 1-8 3" stroke="#fff" stroke-width="2.2" fill="none"/></svg>
<svg class="a" style="left:505px;top:1048px" width="24" height="24" viewBox="0 0 24 24"><path d="M4 3h13l3 3v16H4z" fill="#f4f4e8" stroke="#888" stroke-width=".5"/><rect x="5" y="12" width="14" height="9" fill="#5ac02a"/><path d="M8 7v8M10 9h3" stroke="#333" stroke-width="1.2"/><path d="M14 17l7-14" stroke="#f0b020" stroke-width="2"/></svg>
<svg class="a" style="left:554px;top:1048px" width="24" height="24" viewBox="0 0 24 24"><rect x="5" y="2" width="14" height="20" rx="1" fill="#7ab8e8" stroke="#4a88c8" stroke-width=".6"/><rect x="7" y="4" width="10" height="4" fill="#f8f0c0"/><g fill="#fff"><rect x="7" y="10" width="2" height="2"/><rect x="11" y="10" width="2" height="2"/><rect x="15" y="10" width="2" height="2"/><rect x="7" y="14" width="2" height="2"/><rect x="11" y="14" width="2" height="2"/><rect x="7" y="18" width="2" height="2"/><rect x="11" y="18" width="2" height="2"/></g><rect x="15" y="14" width="2" height="6" fill="#f0a030"/></svg>
<svg class="a" style="left:603px;top:1048px" width="24" height="24" viewBox="0 0 24 24"><rect x="2" y="4" width="20" height="16" fill="#f0f0f0" stroke="#999" stroke-width=".5"/><rect x="7" y="7" width="7" height="11" fill="#1a6ae0"/><path d="M15 9h5M15 12h5M15 15h5M3 9h3M3 12h3" stroke="#666" stroke-width=".8"/></svg>
<svg class="a" style="left:649px;top:1048px" width="24" height="24" viewBox="0 0 24 24"><path d="M2 5h5l4 12h5v-4h-4" stroke="#1a8aa0" stroke-width="3" fill="none"/><path d="M14 4h6l1 6h-8z" fill="#f09010"/><rect x="16" y="6" width="3" height="2" fill="#fff"/></svg>
<svg class="a" style="left:701px;top:1048px" width="24" height="24" viewBox="0 0 24 24"><ellipse cx="10" cy="6" rx="5" ry="2" fill="#f0e070"/><path d="M5 6v12a5 2 0 0 0 10 0V6" fill="#f0d840"/><path d="M12 12l8 8M20 12l-8 8" stroke="#9a4ad8" stroke-width="2"/><path d="M3 18v4h4M17 2h4v4" stroke="#3ab040" stroke-width="1.5" fill="none"/></svg>
<svg class="a" style="left:747px;top:1048px" width="24" height="24" viewBox="0 0 24 24"><path d="M4 6l13-4 4 15-13 5z" fill="#8ac8e0"/><path d="M6 7l10-3 3 12-10 3z" fill="#c8e8f4"/><path d="M17 3l4 14 1 4" stroke="#d8b070" stroke-width="1.5" fill="none"/></svg>
<svg class="a" style="left:799px;top:1048px" width="24" height="24" viewBox="0 0 24 24"><circle cx="12" cy="12" r="10" fill="#1a8ae8"/><path d="M5 9c4-3 9-2 13 1-4-1-6 0-7 2 3 1 5 4 4 8-2-3-4-5-6-5-2 1-3 3-3 5-1-4 0-7 3-9-2-1-3-1-4-2z" fill="#111"/></svg>
<svg class="a" style="left:848px;top:1048px" width="24" height="24" viewBox="0 0 24 24"><path d="M4 2h12l4 4v16H4z" fill="#7a2a90"/><circle cx="12" cy="13" r="5" fill="#fff"/><circle cx="13" cy="12" r="2.5" fill="#7a2a90"/></svg>
<svg class="a" style="left:897px;top:1048px" width="24" height="24" viewBox="0 0 24 24"><rect x="3" y="3" width="18" height="18" rx="2" fill="#3a7ae8"/><path d="M3 19l7-8 5 5 6-4v9H3z" fill="#5ad0f8"/><circle cx="17" cy="7" r="1.8" fill="#fff"/></svg>
<svg class="a" style="left:946px;top:1048px" width="24" height="24" viewBox="0 0 24 24"><path d="M6 6l2-3 2 3h4l2-3 2 3v6l3 5-4 2-1-3-2 4h-4l-2-4-1 3-4-2 3-5z" fill="#1a6ae8"/><circle cx="10" cy="9" r="1" fill="#fff"/><circle cx="14" cy="9" r="1" fill="#fff"/></svg>
<svg class="a" style="left:995px;top:1048px" width="24" height="24" viewBox="0 0 24 24"><circle cx="12" cy="12" r="10" fill="#e8e8e8"/><path d="M2 12a10 10 0 0 1 20 0z" fill="#3aa030"/><text x="12" y="16" font-size="10" font-weight="bold" fill="#111" text-anchor="middle" font-family="Liberation Sans">HS</text></svg>
<svg class="a" style="left:1044px;top:1048px" width="24" height="24" viewBox="0 0 24 24"><rect x="2" y="2" width="20" height="16" fill="#222" stroke="#ccc" stroke-width="1.2"/><path d="M4 5l2 1.5-2 1.5" stroke="#fff" stroke-width=".8" fill="none"/><path d="M12 12l4-4 4 4-4 4z" fill="#3a7ae8"/><path d="M8 15l4-4 3 4-4 4z" fill="#e83a3a"/><path d="M13 19l4-4 4 4-4 4z" fill="#9ae010"/></svg>
<svg class="a" style="left:1093px;top:1048px" width="24" height="24" viewBox="0 0 24 24"><rect x="4" y="3" width="17" height="13" fill="#d8e8f0" stroke="#aaa"/><path d="M6 10l3-3 2 4 2-5 2 4 2-2" stroke="#3a8ae8" stroke-width="1" fill="none"/><rect x="9" y="17" width="7" height="4" fill="#ccc"/><rect x="2" y="5" width="5" height="10" fill="#eee" stroke="#aaa" stroke-width=".5"/></svg>
<svg class="a" style="left:1142px;top:1048px" width="24" height="24" viewBox="0 0 24 24"><rect x="2" y="2" width="20" height="20" rx="5" fill="#111"/><path d="M12 5l7 4v7l-7 4-7-4V9z" fill="#bbb"/><path d="M12 12l7-3v7l-7 4z" fill="#777"/><path d="M5 9l7 3 7-3-7-4z" fill="#eee"/></svg>
<svg class="a" style="left:1191px;top:1048px" width="24" height="24" viewBox="0 0 24 24"><path d="M17 2l5 3v14l-5 3-10-9-4 3-2-1v-6l2-1 4 3z" fill="#9a6ae0"/><path d="M17 7v10l-6-5z" fill="#2a1a4a"/><path d="M3 9l4 3-4 3z" fill="#6a3ab0"/></svg>
<svg class="a" style="left:1240px;top:1048px" width="24" height="24" viewBox="0 0 24 24"><circle cx="12" cy="12" r="10" fill="#8a3ab8"/><path d="M8 18v-3c-2 0-3-2-3-4 0-1 1-2 1-3V6l2 1c2-1 6-1 8 0l2-1v2c0 1 1 2 1 3 0 2-1 4-3 4v3" fill="none" stroke="#fff" stroke-width="1.6"/></svg>
<svg class="a" style="left:1289px;top:1048px" width="24" height="24" viewBox="0 0 24 24"><rect x="2" y="2" width="20" height="20" rx="3" fill="#1e1e1e"/><circle cx="10" cy="7" r="2.5" fill="#f24e1e"/><circle cx="14" cy="7" r="2.5" fill="#ff7262"/><circle cx="10" cy="12" r="2.5" fill="#a259ff"/><circle cx="14" cy="12" r="2.5" fill="#1abcfe"/><circle cx="10" cy="17" r="2.5" fill="#0acf83"/></svg>
<svg class="a" style="left:1338px;top:1048px" width="24" height="24" viewBox="0 0 24 24"><circle cx="12" cy="12" r="10" fill="#4a8ae8"/><path d="M12 2a10 10 0 0 1 9 6H12z" fill="#7ab0f0"/><circle cx="12" cy="12" r="5" fill="#fff"/><circle cx="12" cy="12" r="3.8" fill="#3a7ae0"/></svg>
<svg class="a" style="left:1387px;top:1048px" width="24" height="24" viewBox="0 0 24 24"><path d="M5 4h18l-4 16H1z" fill="#0a1a3a" stroke="#7a9ad0" stroke-width=".6"/><path d="M7 7l5 4-6 5M12 16h5" stroke="#fff" stroke-width="1.6" fill="none"/></svg>
<svg class="a" style="left:1436px;top:1048px" width="24" height="24" viewBox="0 0 24 24"><circle cx="12" cy="12" r="10" fill="#2a7ad8"/><rect x="6" y="7" width="12" height="8" fill="#fff"/><path d="M7 14l10-6" stroke="#2a7ad8" stroke-width="1"/><path d="M10 17h4" stroke="#fff" stroke-width="1.5"/></svg>
<svg class="a" style="left:1485px;top:1048px" width="24" height="24" viewBox="0 0 24 24"><rect x="2" y="2" width="20" height="20" rx="3" fill="#111" stroke="#666"/><text x="7" y="17" font-size="9" font-weight="bold" fill="#2a5ae0" font-family="Liberation Sans">m</text><text x="13" y="16" font-size="11" font-weight="bold" fill="#ddd" font-family="Liberation Sans">R</text></svg>
<svg class="a" style="left:1534px;top:1048px" width="24" height="24" viewBox="0 0 24 24"><rect x="2" y="2" width="20" height="20" rx="3" fill="#1a78e0"/><text x="12" y="10" font-size="6.5" font-weight="bold" fill="#fff" text-anchor="middle" font-family="Liberation Sans">Quick</text><text x="12" y="17" font-size="6.5" font-weight="bold" fill="#fff" text-anchor="middle" font-family="Liberation Sans">utmo</text></svg>
<svg class="a" style="left:1583px;top:1048px" width="24" height="24" viewBox="0 0 24 24"><rect x="3" y="2" width="18" height="18" fill="#333"/><rect x="3" y="2" width="18" height="2" fill="#2a8ae8"/><path d="M5 8h5M5 11h3M5 14h4" stroke="#3a3" stroke-width="1"/><path d="M14 8h4a2 2 0 0 1 2 2v3h-6a2 2 0 0 0-2 2v3h-2v-6a2 2 0 0 1 2-2h2z" fill="#3a78b8"/><path d="M14 22h-2a2 2 0 0 1-2-2v-3h6a2 2 0 0 0 2-2v-3h2v6a2 2 0 0 1-2 2h-2z" fill="#f8d030"/></svg>
<svg class="a" style="left:1692px;top:1053px" width="16" height="12"><path d="M2 9l6-6 6 6" stroke="#fff" stroke-width="1.3" fill="none"/></svg>
<svg class="a" style="left:1718px;top:1051px" width="18" height="16" viewBox="0 0 18 16"><path d="M2 14a12 12 0 0 1 14-12M5 14a8 8 0 0 1 9-9M8 14a4 4 0 0 1 5-5" stroke="#fff" stroke-width="1.3" fill="none"/><circle cx="13" cy="13" r="1.5" fill="#fff"/></svg>
<svg class="a" style="left:1740px;top:1051px" width="18" height="16" viewBox="0 0 18 16"><path d="M1 5h3l4-4v14l-4-4H1z" fill="none" stroke="#fff" stroke-width="1.2"/><path d="M11 4a5 5 0 0 1 0 8M13.5 2a8 8 0 0 1 0 12" stroke="#fff" stroke-width="1.2" fill="none"/></svg>
<div class="a nw" style="left:1767px;top:1052px;font-size:11px;color:#fff">ENG</div>
<div class="a nw" style="left:1804px;top:1043px;font-size:11.6px;color:#fff">10:55 AM</div>
<div class="a nw" style="left:1802px;top:1061px;font-size:12px;color:#fff">2/23/2026</div>
<svg class="a" style="left:1872px;top:1050px" width="30" height="26" viewBox="0 0 30 26"><path d="M2 2h16v11H8l-3 3v-3H2z" fill="#fff"/><circle cx="19" cy="17" r="8" fill="#1c2c36" stroke="#aaa"/><text x="19" y="21" font-size="10" font-family="Liberation Sans" font-weight="bold" fill="#fff" text-anchor="middle">32</text></svg>
<div class="a" style="left:122px;top:20px;width:1575px;height:967px;background:#0c0c0c;border-bottom:1px solid #3a3a3a"></div>
<div class="a" style="left:122px;top:20px;width:1575px;height:30px;background:#fff"></div>
<svg class="a" style="left:130px;top:28px" width="16" height="13" viewBox="0 0 16 13"><path d="M3 0h13l-3 13H0z" fill="#1a2d4a"/><path d="M4 3l4 3-5 3.5M8 10h4" stroke="#fff" stroke-width="1.3" fill="none"/></svg>
<div class="a nw" style="left:155px;top:28px;font-size:12px;color:#777">&middot; <span style="color:#5a5a5a">запуск и проверка</span></div>
<svg class="a" style="left:1560px;top:20px" width="137" height="30">
<path d="M18 14.5h10" stroke="#888" stroke-width="1"/>
<rect x="63.5" y="9.5" width="9" height="9" fill="none" stroke="#888"/>
<path d="M109 9l10 10M119 9l-10 10" stroke="#888" stroke-width="1"/>
</svg>
<div class="a" style="left:1680px;top:50px;width:17px;height:936px;background:#f0f0f0;border-left:1px solid #fff"></div>
<svg class="a" style="left:1683px;top:55px" width="12" height="10"><path d="M1.5 7l4.5-4.5 4.5 4.5" stroke="#555" stroke-width="2" fill="none"/></svg>
<div class="a" style="left:1681px;top:952px;width:15px;height:17px;background:#cdcdcd"></div>
<svg class="a" style="left:1683px;top:973px" width="12" height="10"><path d="M1.5 3l4.5 4.5 4.5-4.5" stroke="#555" stroke-width="2" fill="none"/></svg>
<div class="a" style="left:122px;top:50px;width:1558px;height:936px;overflow:hidden">
<div class="tl" style="top:2px">     <span class="rd">Missing expression after &#x27;,&#x27;.</span></div>
<div class="tl" style="top:18px">     <span class="rd">At line:40 char:30</span></div>
<div class="tl" style="top:34px">     <span class="rd">+ \.CopyFromScreen(0, 0, 0, 0, \.Size)</span></div>
<div class="tl" style="top:50px">     <span class="rd">+                              ~~~~~~</span></div>
<div class="tl" style="top:66px">     <span class="rd">Unexpected token &#x27;\.Size&#x27; in expression or statement.</span></div>
<div class="tl" style="top:82px">     <span class="rd">At line:40 char:29</span></div>
<div class="tl" style="top:98px">     <span class="gy">… +45 lines (ctrl+o to see all)</span></div>
<div class="tl" style="top:130px"><span class="dot" style="background:#f0f0f0"></span> <span class="wh">Ошибка в PowerShell скрипте из-за <span style="color:#8a7ef0">$</span> escaping в bash heredoc</span></div>
<div class="tl" style="top:162px"><span class="dot" style="background:#4cc266"></span> <span class="bd">Bash</span><span class="wh">(powershell -File - &lt;&lt;&#x27;PSEOF&#x27;</span></div>
<div class="tl" style="top:178px">      <span class="wh">Add-Type -AssemblyName System.Windows.Forms</span></div>
<div class="tl" style="top:194px">  <span class="gy"><svg width="8" height="10" viewBox="0 0 8 10" style="vertical-align:-1px"><rect x=".6" y=".6" width="6.8" height="8.8" fill="none" stroke="currentColor" stroke-width="1.2"/><path d="M2.8 3.2a1.3 1.2 0 1 1 1.8 1.1L4 5.2" fill="none" stroke="currentColor" stroke-width=".9"/><rect x="3.5" y="6.3" width="1" height="1" fill="currentColor"/></svg></span>  <span class="wh">(base) PS D:\CODING\GitHub&gt; Add-Type -AssemblyName System.Windows.Forms</span></div>
<div class="tl" style="top:210px">     <span class="wh">(base) PS D:\CODING\GitHub&gt; Add-Type -AssemblyName System.Drawing</span></div>
<div class="tl" style="top:226px">     <span class="wh">(base) PS D:\CODING\GitHub&gt;</span></div>
<div class="tl" style="top:242px">     <span class="gy">… +19 lines (ctrl+o to expand)</span></div>
<div class="tl" style="top:274px"><span class="dot" style="background:#4cc266"></span> <span class="bd">Read</span> <span class="wh">1 file</span> <span class="gy">(ctrl+o to expand)</span></div>
<div class="tl" style="top:306px"><span class="dot" style="background:#f0f0f0"></span> <span class="wh">Клик попадает на "Настройка". Таб "2FA" очень узкий</span></div>
<div class="tl" style="top:338px"><span class="dot" style="background:#4cc266"></span> <span class="bd">Bash</span><span class="wh">(powershell -File - &lt;&lt;&#x27;PSEOF&#x27;</span></div>
<div class="tl" style="top:354px">      <span class="wh">Add-Type -AssemblyName System.Windows.Forms</span></div>
<div class="tl" style="top:370px">  <span class="gy"><svg width="8" height="10" viewBox="0 0 8 10" style="vertical-align:-1px"><rect x=".6" y=".6" width="6.8" height="8.8" fill="none" stroke="currentColor" stroke-width="1.2"/><path d="M2.8 3.2a1.3 1.2 0 1 1 1.8 1.1L4 5.2" fill="none" stroke="currentColor" stroke-width=".9"/><rect x="3.5" y="6.3" width="1" height="1" fill="currentColor"/></svg></span>  <span class="wh">(base) PS D:\CODING\GitHub&gt; Add-Type -AssemblyName System.Windows.Forms</span></div>
<div class="tl" style="top:386px">     <span class="wh">(base) PS D:\CODING\GitHub&gt; Add-Type -AssemblyName System.Drawing</span></div>
<div class="tl" style="top:402px">     <span class="wh">(base) PS D:\CODING\GitHub&gt;</span></div>
<div class="tl" style="top:418px">     <span class="gy">… +19 lines (ctrl+o to expand)</span></div>
<div class="tl" style="top:450px"><span class="dot" style="background:#4cc266"></span> <span class="bd">Read</span> <span class="wh">1 file</span> <span class="gy">(ctrl+o to expand)</span></div>
<div class="tl" style="top:482px"><span class="dot" style="background:#f0f0f0"></span> <span class="wh">[thinking] Still clicking on "Настройка". The</span></div>
<div class="tl" style="top:498px">  <span class="wh">- The tab names visible: Терминал | Файлы | Инфо</span></div>
<div class="tl" style="top:514px">  <span class="wh">- "Настройка" is highlighted (active)</span></div>
<div class="tl" style="top:530px">  <span class="wh">- The window left edge is at about x=375</span></div>
<div class="tl" style="top:546px">  <span class="wh">- Tab bar starts at roughly x=755 (where "Терминал"</span></div>
<div class="tl" style="top:578px">  <span class="wh">Let me estimate tab positions more carefully:</span></div>
<div class="tl" style="top:594px">  <span class="wh">- Терминал: ~755-810</span></div>
<div class="tl" style="top:610px">  <span class="wh">- Файлы: ~810-855</span></div>
<div class="tl" style="top:626px">  <span class="wh">- Инфо: ~855-890</span></div>
<div class="tl" style="top:642px">  <span class="wh">- Ключи: ~890-935</span></div>
<div class="tl" style="top:658px">  <span class="wh">- 2FA: ~935-960</span></div>
<div class="tl" style="top:674px">  <span class="wh">- Настройка: ~960-1020</span></div>
<div class="tl" style="top:706px">  <span class="wh">So "2FA" is between approximately x=935 and x=960</span></div>
<div class="tl" style="top:722px">  <span class="wh">Таб "2FA" очень узкий. Попробую кликнуть по центру</span></div>
<div class="tl" style="top:754px"><span class="dot" style="background:#9a9a9a"></span> <span class="bd">Bash</span><span class="wh">(powershell -File - &lt;&lt;&#x27;PSEOF&#x27;</span></div>
<div class="tl" style="top:770px">      <span class="wh">Add-Type -AssemblyName System.Windows.Forms</span></div>
<div class="tl" style="top:786px">  <span class="gy"><svg width="8" height="10" viewBox="0 0 8 10" style="vertical-align:-1px"><rect x=".6" y=".6" width="6.8" height="8.8" fill="none" stroke="currentColor" stroke-width="1.2"/><path d="M2.8 3.2a1.3 1.2 0 1 1 1.8 1.1L4 5.2" fill="none" stroke="currentColor" stroke-width=".9"/><rect x="3.5" y="6.3" width="1" height="1" fill="currentColor"/></svg>  Running…</span></div>
<div class="tl" style="top:818px"><span class="or"><svg width="8" height="10" viewBox="0 0 8 10" style="vertical-align:-1px"><rect x=".6" y=".6" width="6.8" height="8.8" fill="none" stroke="currentColor" stroke-width="1.2"/><path d="M2.8 3.2a1.3 1.2 0 1 1 1.8 1.1L4 5.2" fill="none" stroke="currentColor" stroke-width=".9"/><rect x="3.5" y="6.3" width="1" height="1" fill="currentColor"/></svg> Prestidigitating…</span> <span class="gy">(3m 11s · ↓ 2.8k tokens · thinking)</span></div>
<div class="tl" style="top:866px"><span class="gy">&gt;</span> </div>
<div class="tl" style="top:898px">  <span class="pk"><svg width="8" height="10" viewBox="0 0 8 10" style="vertical-align:-1px"><rect x=".6" y=".6" width="6.8" height="8.8" fill="none" stroke="currentColor" stroke-width="1.2"/><path d="M2.8 3.2a1.3 1.2 0 1 1 1.8 1.1L4 5.2" fill="none" stroke="currentColor" stroke-width=".9"/><rect x="3.5" y="6.3" width="1" height="1" fill="currentColor"/></svg><svg width="8" height="10" viewBox="0 0 8 10" style="vertical-align:-1px"><rect x=".6" y=".6" width="6.8" height="8.8" fill="none" stroke="currentColor" stroke-width="1.2"/><path d="M2.8 3.2a1.3 1.2 0 1 1 1.8 1.1L4 5.2" fill="none" stroke="currentColor" stroke-width=".9"/><rect x="3.5" y="6.3" width="1" height="1" fill="currentColor"/></svg> bypass permissions on</span> <span class="gy">·</span> <span class="cy">cd D:/CODING/ServerManager &amp;&amp; START /B …</span> <span class="gy">(running) · esc to interrupt</span></div>
</div>
<div class="a" style="left:122px;top:906px;width:1552px;height:1px;background:#b4b4b4"></div>
<div class="a" style="left:122px;top:938px;width:1552px;height:1px;background:#b4b4b4"></div>
<div class="a" style="left:138px;top:914px;width:8px;height:16px;background:#cfcfcf"></div>
<div class="a" style="left:122px;top:974px;width:8px;height:5px;background:#f0f0f0"></div>
<div class="a" style="left:485px;top:99px;width:1141px;height:807px;background:#2c2c2c"></div>
<div class="a" style="left:485px;top:99px;width:1141px;height:1px;background:#3c3c3c"></div>
<div class="a" style="left:486px;top:100px;width:1139px;height:30px;background:#000"></div>
<svg class="a" style="left:494px;top:106px" width="16" height="16" viewBox="0 0 16 16"><rect x="0" y="0" width="16" height="16" rx="4" fill="#0aa0f0"/><path d="M12 0h0a4 4 0 0 1 4 4v8a4 4 0 0 1-4 4z" fill="#0a78c8"/><rect x="4" y="4" width="8" height="8" rx="1" fill="#000"/></svg>
<div class="a nw" style="left:515px;top:108px;font-size:11.5px;color:#fff">ServerManager</div>
<svg class="a" style="left:1500px;top:100px" width="125" height="30">
<path d="M6 14.5h10" stroke="#fff" stroke-width="1"/>
<rect x="51.5" y="9.5" width="9" height="9" fill="none" stroke="#fff"/>
<path d="M97 9l10 10M107 9l-10 10" stroke="#fff" stroke-width="1.1"/>
</svg>
<div class="a" style="left:486px;top:130px;width:1139px;height:775px;background:#242424"></div>
<div class="a" style="left:486px;top:130px;width:250px;height:775px;background:#2b2b2b"></div>
<div class="a nw" style="left:486px;top:149px;width:250px;text-align:center;font-size:18.5px;font-weight:bold;color:#dce4ee">Серверы</div>
<div class="a" style="left:496px;top:183px;width:230px;height:28px;border-radius:6px;background:#343638;border:2px solid #565b5e"></div>
<div class="a" style="left:499px;top:229px;width:214px;height:45px;border-radius:6px;background:#303030"></div>
<div class="a" style="left:512px;top:249px;width:7px;height:7px;border-radius:50%;background:#22c55e"></div>
<div class="a nw" style="left:531px;top:235px;font-size:13.5px;font-weight:bold;color:#dce4ee">investor</div>
<div class="a nw" style="left:531px;top:260px;font-size:10.7px;color:#a8a8a8">173.212.212.157 [ssh]</div>
<div class="a" style="left:499px;top:278px;width:214px;height:45px;border-radius:6px;background:#303030"></div>
<div class="a" style="left:512px;top:298px;width:7px;height:7px;border-radius:50%;background:#ef4444"></div>
<div class="a nw" style="left:531px;top:284px;font-size:13.5px;font-weight:bold;color:#dce4ee">main-ovh</div>
<div class="a nw" style="left:531px;top:309px;font-size:10.7px;color:#a8a8a8">37.187.136.86 [ssh]</div>
<div class="a" style="left:499px;top:327px;width:214px;height:45px;border-radius:6px;background:#303030"></div>
<div class="a" style="left:512px;top:347px;width:7px;height:7px;border-radius:50%;background:#ef4444"></div>
<div class="a nw" style="left:531px;top:333px;font-size:13.5px;font-weight:bold;color:#dce4ee">proxy-checker</div>
<div class="a nw" style="left:531px;top:358px;font-size:10.7px;color:#a8a8a8">161.97.118.40 [ssh]</div>
<div class="a" style="left:719px;top:231px;width:8px;height:612px;border-radius:4px;background:#6a6a6a"></div>
<div class="btn" style="left:496px;top:864px;width:82px;height:30px;line-height:30px;background:#1f6aa5">+ Добавить</div>
<div class="btn" style="left:585px;top:864px;width:76px;height:30px;line-height:30px;background:#6b7280;font-size:13.8px">Изменить</div>
<div class="btn" style="left:667px;top:864px;width:58px;height:30px;line-height:30px;background:#ef4444"></div>
<div class="a" style="left:673px;top:864px;width:47px;height:30px;overflow:hidden"><div class="a nw" style="left:-31px;width:108px;top:0;line-height:30px;text-align:center;font-size:14.5px;color:#dce4ee">Удалить</div></div>
<div class="a" style="left:1450px;top:143px;width:45px;height:30px;border-radius:15px;background:#6b7280"></div>
<svg class="a" style="left:1466px;top:152px" width="14" height="14" viewBox="0 0 14 14"><circle cx="7" cy="7" r="6" fill="none" stroke="#d8d8d8" stroke-width="1"/><path d="M7 6v4.5" stroke="#d8d8d8" stroke-width="1.2"/><circle cx="7" cy="4" r=".8" fill="#d8d8d8"/></svg>
<div class="a" style="left:1505px;top:143px;width:110px;height:30px;border-radius:6px;background:#1f6aa5;overflow:hidden"><div class="a" style="left:80px;top:0;width:30px;height:30px;background:#144870"></div></div>
<div class="a nw" style="left:1513px;top:150px;font-size:13.5px;color:#dce4ee">Русский</div>
<svg class="a" style="left:1594px;top:153px" width="12" height="10"><path d="M2 3l4 3.5 4-3.5" stroke="#dce4ee" stroke-width="2.2" fill="none"/></svg>
<div class="a" style="left:746px;top:206px;width:868px;height:688px;border-radius:6px;background:#2b2b2b"></div>
<div class="a" style="left:1004px;top:198px;width:352px;height:26px;border-radius:6px;background:#4a4a4a"></div>
<div class="a" style="left:1280px;top:201px;width:73px;height:20px;border-radius:4px;background:#1f6aa5"></div>
<div class="a nw" style="left:1011px;top:203px;font-size:13.5px;color:#dce4ee">Терминал</div>
<div class="a nw" style="left:1088px;top:203px;font-size:13.5px;color:#dce4ee">Файлы</div>
<div class="a nw" style="left:1145px;top:203px;font-size:13.5px;color:#dce4ee">Инфо</div>
<div class="a nw" style="left:1192px;top:203px;font-size:13.5px;color:#dce4ee">Ключи</div>
<div class="a nw" style="left:1248px;top:203px;font-size:13.5px;color:#dce4ee">2FA</div>
<div class="a nw" style="left:1284px;top:203px;font-size:13.5px;color:#dce4ee">Настройка</div>
<div class="a nw" style="left:746px;top:252px;width:868px;text-align:center;font-size:20.5px;font-weight:bold;color:#dce4ee">Интеграция с Claude Code</div>
<div class="a nw" style="left:746px;top:283px;width:868px;text-align:center;font-size:13px;line-height:15px;color:#a9a9a9">Настройте всё, чтобы Claude Code мог управлять серверами через скилл /ssh.</div>
<div class="a nw" style="left:746px;top:298px;width:868px;text-align:center;font-size:13px;line-height:15px;color:#a9a9a9">GUI и Claude Code используют один servers.json — добавьте сервер здесь,</div>
<div class="a nw" style="left:746px;top:313px;width:868px;text-align:center;font-size:13px;line-height:15px;color:#a9a9a9">Claude увидит его сразу.</div>
<div class="a nw" style="left:787px;top:367px;font-size:15px;font-weight:bold;color:#dce4ee">Статус</div>
<div class="a" style="left:793px;top:408px;width:8px;height:8px;border-radius:50%;background:#22c55e"></div>
<div class="a nw" style="left:807px;top:404px;font-size:13px;color:#dce4ee">Общий каталог (~/.server-connections)</div>
<div class="a" style="left:793px;top:440px;width:8px;height:8px;border-radius:50%;background:#22c55e"></div>
<div class="a nw" style="left:807px;top:436px;font-size:13px;color:#dce4ee">servers.json</div>
<div class="a" style="left:793px;top:472px;width:8px;height:8px;border-radius:50%;background:#22c55e"></div>
<div class="a nw" style="left:807px;top:468px;font-size:13px;color:#dce4ee">ssh.py (CLI-утилита)</div>
<div class="a" style="left:793px;top:504px;width:8px;height:8px;border-radius:50%;background:#22c55e"></div>
<div class="a nw" style="left:807px;top:500px;font-size:13px;color:#dce4ee">Модуль шифрования</div>
<div class="a" style="left:793px;top:536px;width:8px;height:8px;border-radius:50%;background:#22c55e"></div>
<div class="a nw" style="left:807px;top:532px;font-size:13px;color:#dce4ee">Скилл /ssh для Claude Code</div>
<div class="a" style="left:793px;top:568px;width:8px;height:8px;border-radius:50%;background:#22c55e"></div>
<div class="a nw" style="left:807px;top:564px;font-size:13px;color:#dce4ee">SSH-ключ (ed25519)</div>
<div class="btn" style="left:772px;top:613px;width:816px;height:40px;line-height:40px;background:#22c55e;font-weight:bold;font-size:14px;letter-spacing:0.6px">Установить всё</div>
<div class="btn" style="left:772px;top:663px;width:100px;height:28px;line-height:28px;background:#6b7280">ssh.py</div>
<div class="btn" style="left:882px;top:663px;width:100px;height:28px;line-height:28px;background:#6b7280">Скилл /ssh</div>
<div class="btn" style="left:992px;top:663px;width:100px;height:28px;line-height:28px;background:#6b7280">SSH-ключ</div>
<div class="btn" style="left:1509px;top:663px;width:79px;height:28px;line-height:28px;background:#3b82f6">Обновить</div>
<div class="a nw" style="left:787px;top:725px;font-size:15px;font-weight:bold;color:#dce4ee">Конфигурация</div>
<div class="a nw" style="left:787px;top:765px;font-size:13px;color:#dce4ee">Конфиг:</div>
<div class="a nw mono" style="left:852px;top:766px;font-size:10px;color:#a9a9a9">C:\Users\Norman/.server-connections\servers.json</div>
<div class="btn" style="left:1468px;top:759px;width:106px;height:28px;line-height:28px;background:#6b7280">Изменить путь</div>
<div class="btn" style="left:787px;top:797px;width:100px;height:28px;line-height:28px;background:#3b82f6">Бэкап сейчас</div>
<div class="a" style="left:897px;top:797px;width:250px;height:28px;border-radius:6px;background:#1f6aa5;overflow:hidden"><div class="a" style="left:222px;top:0;width:28px;height:28px;background:#144870"></div></div>
<div class="a nw" style="left:904px;top:803px;font-size:13px;color:#dce4ee">Выберите бэкап...</div>
<svg class="a" style="left:1127px;top:806px" width="12" height="10"><path d="M2 3l4 3.5 4-3.5" stroke="#dce4ee" stroke-width="2.2" fill="none"/></svg>
<div class="btn" style="left:1157px;top:797px;width:98px;height:28px;line-height:28px;background:#ef4444">Восстановить</div>
<div class="a" style="left:772px;top:845px;width:816px;height:22px;border-radius:6px;background:#1d1e1e"></div>
<div class="a" style="left:1578px;top:851px;width:8px;height:11px;border-radius:2px;background:#6a6a6a"></div>
</body></html>
